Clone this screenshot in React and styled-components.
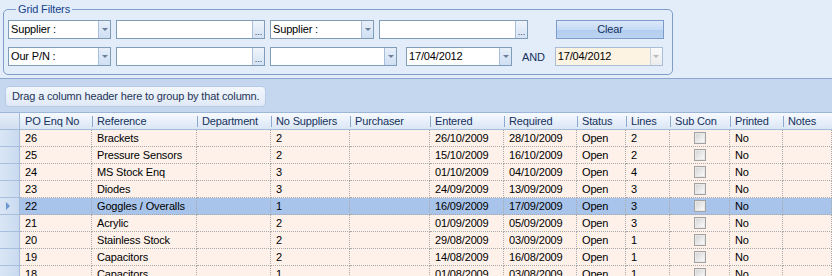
import styled, { createGlobalStyle } from "styled-components";

const GlobalStyle = createGlobalStyle`
  html, body {
    margin: 0;
    padding: 0;
    background: #e3edfa;
  }
  body {
    font-family: "Liberation Sans", Arial, sans-serif;
    font-size: 11px;
    letter-spacing: -0.15px;
    color: #000;
  }
`;

const Page = styled.div`
  width: 832px;
  height: 276px;
  overflow: hidden;
  display: flex;
  flex-direction: column;
  background: #e3edfa;
`;

const FilterArea = styled.div`
  padding: 3px 0 3px 3px;
`;

const Fieldset = styled.fieldset`
  width: 660px;
  margin: 0;
  padding: 4px 4px 8px 4px;
  border: 1px solid #7f9ccb;
  border-radius: 5px;
  display: flex;
  flex-direction: column;
  gap: 8px;
`;

const Legend = styled.legend`
  padding: 0 2px;
  margin-left: 8px;
  color: #15428b;
  font-size: 11px;
  line-height: 13px;
`;

const FilterRow = styled.div`
  display: flex;
  align-items: center;
  height: 19px;
`;

const Box = styled.div`
  box-sizing: border-box;
  width: ${(p) => p.$w}px;
  margin-left: ${(p) => p.$ml || 0}px;
  height: 19px;
  display: flex;
  border: 1px solid ${(p) => (p.$disabled ? "#a9bdd9" : "#7f9db9")};
  background: ${(p) => (p.$disabled ? "#fcf3e3" : "#fff")};
`;

const BoxText = styled.div`
  flex: 1;
  padding-left: 2px;
  line-height: 17px;
  white-space: nowrap;
  overflow: hidden;
`;

const DropButton = styled.div`
  width: 11px;
  border-left: 1px solid ${(p) => (p.$disabled ? "#c9d3df" : "#a8bedc")};
  background: ${(p) =>
    p.$disabled
      ? "linear-gradient(#fafafa, #ececec)"
      : "linear-gradient(#e7eff9, #cfdff3)"};
  display: flex;
  align-items: center;
  justify-content: center;

  &::after {
    content: "";
    border-left: 3px solid transparent;
    border-right: 3px solid transparent;
    border-top: 3px solid ${(p) => (p.$disabled ? "#b9b9b9" : "#6b7f9c")};
  }
`;

const EllipsisButton = styled.div`
  box-sizing: border-box;
  width: 12px;
  border-left: 1px solid #a8bedc;
  background: linear-gradient(#eef4fb, #d5e3f4);
  color: #1f3a66;
  font-size: 9px;
  line-height: 8px;
  letter-spacing: 0;
  display: flex;
  align-items: flex-end;
  justify-content: center;
  padding-bottom: 2px;
`;

const ClearButton = styled.div`
  box-sizing: border-box;
  width: 108px;
  height: 19px;
  margin-left: 28px;
  border: 1px solid #7d9ccb;
  background: linear-gradient(#dbe8f9 0%, #c6dbf5 50%, #b3cdef 51%, #bcd4f2 100%);
  text-align: center;
  line-height: 17px;
  color: #15315c;
`;

const AndLabel = styled.div`
  margin-left: 10px;
  margin-right: 10px;
  color: #15315c;
`;

const GroupPanel = styled.div`
  border-top: 1px solid #8ba7cf;
  background: #c4d7ef;
  padding: 7px 0 5px 5px;
`;

const GroupButton = styled.div`
  display: inline-block;
  box-sizing: border-box;
  height: 21px;
  padding: 0 6px;
  line-height: 19px;
  border: 1px solid #b7cbe6;
  border-radius: 4px;
  background: linear-gradient(#f3f7fd, #dfe9f6);
  color: #1f3557;
`;

const cols = "20px 72px 105px 74px 79px 80px 74px 73px 49px 44px 60px 53px 49px";

const HeaderRow = styled.div`
  display: grid;
  grid-template-columns: ${cols};
  height: 16px;
  border-top: 1px solid #9cb6da;
  background: linear-gradient(#f7faff, #e8f0fa 50%, #dbe6f5);
  border-bottom: 1px solid #a3bbdb;
`;

const HeaderCell = styled.div`
  position: relative;
  padding-left: 5px;
  line-height: 17px;
  white-space: nowrap;
  overflow: hidden;
  color: #15315c;

  &::before {
    content: "";
    position: absolute;
    left: 0;
    top: 3px;
    bottom: 2px;
    width: 1px;
    background: ${(p) => (p.$first ? "transparent" : "#8ca9d1")};
  }
`;

const HeaderIndicator = styled.div`
  border-right: 1px solid #a3bbdb;
  background: linear-gradient(#e6eef9, #d1def0);
`;

const Row = styled.div`
  display: grid;
  grid-template-columns: ${cols};
  height: 17px;
  background: ${(p) => (p.$selected ? "#a9c4ea" : "#fdf1ea")};
`;

const Indicator = styled.div`
  box-sizing: border-box;
  border-right: 1px solid #a3bbdb;
  border-bottom: 1px solid #a7bedf;
  background: linear-gradient(90deg, #dae6f5, #c9daf0);
  display: flex;
  align-items: center;
  padding-left: 6px;

  &::after {
    content: "";
    display: ${(p) => (p.$selected ? "block" : "none")};
    border-top: 4px solid transparent;
    border-bottom: 4px solid transparent;
    border-left: 4px solid #6c97d0;
  }
`;

const Cell = styled.div`
  box-sizing: border-box;
  line-height: 16px;
  white-space: nowrap;
  overflow: hidden;
  border-right: 1px dotted #a9a9a9;
  border-bottom: 1px dotted #a9a9a9;
  display: flex;
  align-items: center;
  justify-content: ${(p) => (p.$center ? "center" : "flex-start")};
  padding-left: ${(p) => (p.$center ? 0 : 5)}px;
`;

const Check = styled.span`
  box-sizing: border-box;
  width: 12px;
  height: 12px;
  border: 1px solid #a2a2a2;
  background: linear-gradient(135deg, #d2d2d2, #f5f5f5 80%);
  box-shadow: inset 0 0 0 1px #e8e8e8;
`;

const headers = [
  "PO Enq No",
  "Reference",
  "Department",
  "No Suppliers",
  "Purchaser",
  "Entered",
  "Required",
  "Status",
  "Lines",
  "Sub Con",
  "Printed",
  "Notes",
];

const rows = [
  ["26", "Brackets", "2", "26/10/2009", "28/10/2009", "2"],
  ["25", "Pressure Sensors", "2", "15/10/2009", "16/10/2009", "2"],
  ["24", "MS Stock Enq", "3", "01/10/2009", "04/10/2009", "4"],
  ["23", "Diodes", "3", "24/09/2009", "13/09/2009", "3"],
  ["22", "Goggles / Overalls", "1", "16/09/2009", "17/09/2009", "3"],
  ["21", "Acrylic", "2", "01/09/2009", "05/09/2009", "3"],
  ["20", "Stainless Stock", "2", "29/08/2009", "03/09/2009", "1"],
  ["19", "Capacitors", "2", "14/08/2009", "16/08/2009", "1"],
  ["18", "Capacitors", "1", "01/08/2009", "03/08/2009", "1"],
];

function Combo({ w, ml, text, disabled }) {
  return (
    <Box $w={w} $ml={ml} $disabled={disabled}>
      <BoxText>{text}</BoxText>
      <DropButton $disabled={disabled} />
    </Box>
  );
}

function Picker({ w, ml }) {
  return (
    <Box $w={w} $ml={ml}>
      <BoxText />
      <EllipsisButton>...</EllipsisButton>
    </Box>
  );
}

export default function App() {
  return (
    <Page>
      <GlobalStyle />
      <FilterArea>
        <Fieldset>
          <Legend>Grid Filters</Legend>
          <FilterRow>
            <Combo w={103} text="Supplier :" />
            <Picker w={149} ml={5} />
            <Combo w={104} ml={5} text="Supplier :" />
            <Picker w={149} ml={5} />
            <ClearButton>Clear</ClearButton>
          </FilterRow>
          <FilterRow>
            <Combo w={103} text="Our P/N :" />
            <Picker w={149} ml={5} />
            <Combo w={127} ml={5} />
            <Combo w={106} ml={9} text="17/04/2012" />
            <AndLabel>AND</AndLabel>
            <Combo w={108} text="17/04/2012" disabled />
          </FilterRow>
        </Fieldset>
      </FilterArea>
      <GroupPanel>
        <GroupButton>Drag a column header here to group by that column.</GroupButton>
      </GroupPanel>
      <HeaderRow>
        <HeaderIndicator />
        {headers.map((h, i) => (
          <HeaderCell key={h} $first={i === 0}>
            {h}
          </HeaderCell>
        ))}
      </HeaderRow>
      {rows.map((r) => {
        const selected = r[0] === "22";
        return (
          <Row key={r[0]} $selected={selected}>
            <Indicator $selected={selected} />
            <Cell>{r[0]}</Cell>
            <Cell>{r[1]}</Cell>
            <Cell />
            <Cell>{r[2]}</Cell>
            <Cell />
            <Cell>{r[3]}</Cell>
            <Cell>{r[4]}</Cell>
            <Cell>Open</Cell>
            <Cell>{r[5]}</Cell>
            <Cell $center>
              <Check />
            </Cell>
            <Cell>No</Cell>
            <Cell />
          </Row>
        );
      })}
    </Page>
  );
}
